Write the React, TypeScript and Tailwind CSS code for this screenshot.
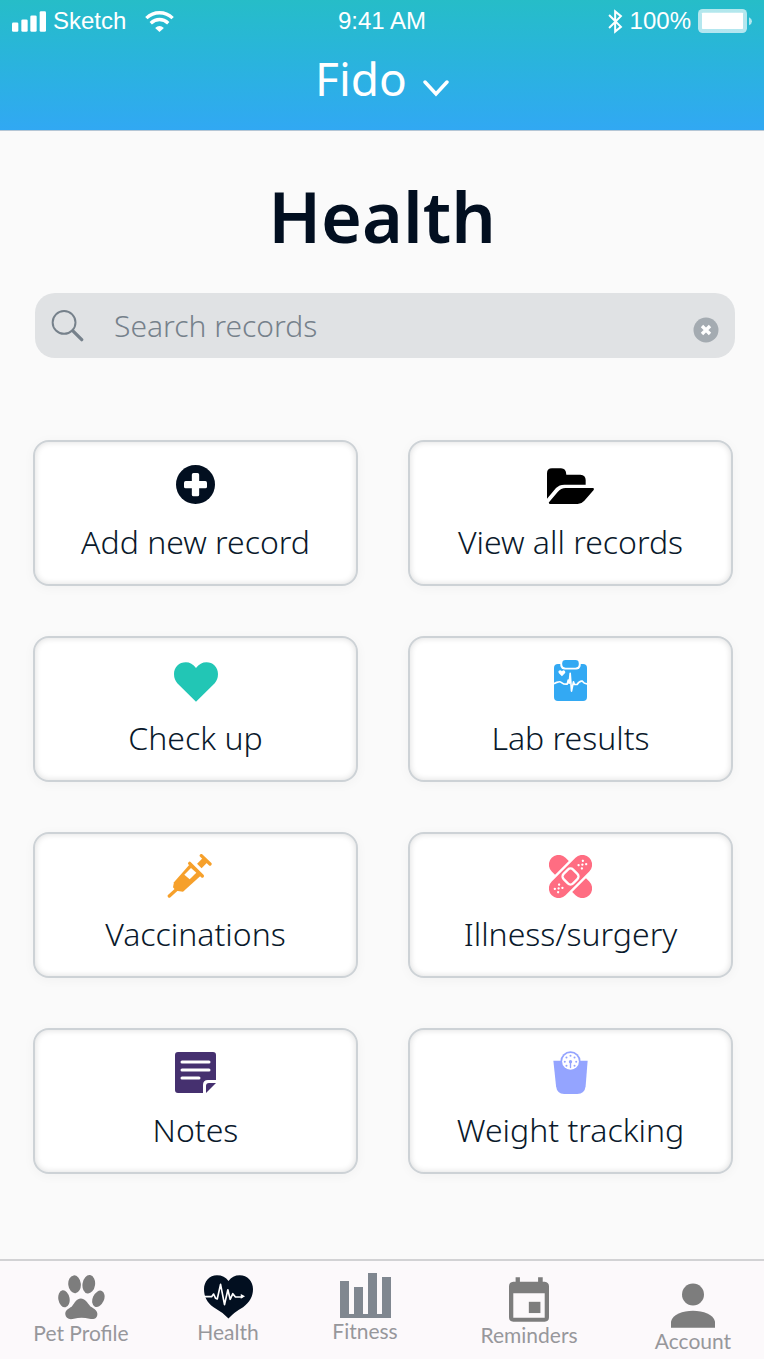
import React, { type ReactNode } from "react";

function SignalIcon() {
  return (
    <svg viewBox="0 0 102 62" className="h-[21px] w-[34px]" fill="currentColor" aria-hidden="true">
      <rect x="0" y="34" width="19" height="28" rx="4" />
      <rect x="28" y="25" width="19" height="37" rx="4" />
      <rect x="55" y="13" width="19" height="49" rx="4" />
      <rect x="83" y="0" width="19" height="62" rx="4" />
    </svg>
  );
}

function WifiIcon() {
  return (
    <svg viewBox="0 0 86 62" className="h-[21px] w-[29px]" fill="none" stroke="currentColor" strokeWidth="10" aria-hidden="true">
      <path d="M4 21Q21 5 43 5T82 21" />
      <path d="M17 36Q29 25 43 25T69 36" />
      <path d="M43 62L30 50Q43 39 56 50Z" fill="currentColor" stroke="none" />
    </svg>
  );
}

function BluetoothIcon() {
  return (
    <svg viewBox="0 0 44 74" className="h-[25px] w-[15px]" fill="none" stroke="currentColor" strokeWidth="6" aria-hidden="true">
      <path d="M3 18L38 53L21 67V7L38 21L3 56" />
    </svg>
  );
}

function BatteryIcon() {
  return (
    <svg viewBox="0 0 162 72" className="h-6 w-[54px]" fill="currentColor" aria-hidden="true">
      <rect x="0" y="0" width="147" height="72" rx="14" opacity="0.65" />
      <rect x="12" y="11" width="123" height="49" rx="2" />
      <path d="M153 25Q162 29 162 37T153 49Z" opacity="0.65" />
    </svg>
  );
}

function PlusIcon() {
  return (
    <svg viewBox="0 0 117 117" className="h-[39px] w-[39px]" aria-hidden="true">
      <circle cx="58.5" cy="58.5" r="58.5" fill="#020f20" />
      <rect x="24" y="48" width="69" height="22" rx="5" fill="#fff" />
      <rect x="47.5" y="24" width="22" height="70" rx="5" fill="#fff" />
    </svg>
  );
}

function FolderIcon() {
  return (
    <svg viewBox="0 0 141 108" className="mt-1 h-9 w-[47px]" fill="#000" aria-hidden="true">
      <path d="M0 92V16Q0 1 15 1H42Q57 1 58 20H100Q116 21 116 36V50H52Q37 50 27 60Z" />
      <path d="M6 103L32 72Q42 60 56 60H138Q142 61 140 66L112 98Q103 108 92 108H10Q4 107 6 103Z" />
    </svg>
  );
}

function HeartIcon() {
  return (
    <svg viewBox="0 0 134 121" className="mt-1 h-10 w-11" fill="#22c6b5" aria-hidden="true">
      <path d="M67 121L10 64Q0 52 0 36C0 14 16 0 36 0Q54 0 67 18Q80 0 99 0C118 0 134 14 134 36Q134 52 124 64Z" />
    </svg>
  );
}

function ClipboardIcon() {
  return (
    <svg viewBox="0 0 100 124" className="h-[41px] w-[33px]" aria-hidden="true">
      <rect x="0" y="12" width="100" height="112" rx="12" fill="#33a9f3" />
      <rect x="19" y="-5" width="62" height="34" rx="14" fill="#fff" />
      <rect x="25" y="0" width="50" height="23" rx="10" fill="#33a9f3" />
      <path d="M24 49L15 40Q12 36 14 33Q19 28 24 34Q29 28 33 33Q36 37 33 40Z" fill="#fff" />
      <path
        d="M0 62Q7 58 11 57Q17 54 24 59Q30 64 40 63L43 51L46 60L49 30L53 84L59 56L62 64H70Q78 52 86 54Q91 62 100 62"
        fill="none"
        stroke="#fff"
        strokeWidth="5"
        strokeLinejoin="round"
        transform="translate(0 10)"
      />
    </svg>
  );
}

function SyringeIcon() {
  return (
    <svg viewBox="51 42 171 132" className="h-11 w-[57px]" aria-hidden="true">
      <g stroke="#f6a02b" strokeLinecap="round">
        <path d="M58 168L82 146" strokeWidth="10" />
        <path d="M119 70L157 108" strokeWidth="10" />
        <path d="M154 47L180 72" strokeWidth="10" />
        <path d="M148 78L165 61" strokeWidth="19" strokeLinecap="butt" />
      </g>
      <path d="M118 74L152 107L99 155L78 152L69 142L72 127Z" fill="#f6a02b" />
      <path d="M103 104L123 84L139 98L119 118Z" fill="#fff" />
    </svg>
  );
}

const bandageDots = [
  [66, 98],
  [66, 112],
  [75, 105],
  [84, 98],
  [84, 112],
  [166, 98],
  [166, 112],
  [175, 105],
  [184, 98],
  [184, 112],
];

function BandageIcon() {
  return (
    <svg viewBox="61 41 128 128" className="h-[43px] w-[43px]" aria-hidden="true">
      <rect x="46" y="76" width="158" height="58" rx="29" fill="#ff6d82" transform="rotate(45 125 105)" />
      <g transform="rotate(-45 125 105)">
        <rect x="40" y="69" width="170" height="72" rx="35" fill="#fff" />
        <rect x="46" y="76" width="158" height="58" rx="29" fill="#ff6d82" />
        <rect x="105" y="85" width="40" height="40" rx="11" fill="none" stroke="#fff" strokeWidth="7" />
        <g fill="#fff">
          {bandageDots.map(([x, y]) => (
            <circle key={`${x}-${y}`} cx={x} cy={y} r="3.4" />
          ))}
        </g>
      </g>
    </svg>
  );
}

function NotesIcon() {
  return (
    <svg viewBox="0 0 41 41" className="h-[41px] w-[41px]" aria-hidden="true">
      <path d="M3 0H38Q41 0 41 3V28H33Q28 28 28 33V41H3Q0 41 0 38V3Q0 0 3 0Z" fill="#45306f" />
      <path d="M31 41V34Q31 31 34 31H41Z" fill="#45306f" />
      <path d="M7 10H34M7 18H34M7 26H24" stroke="#fff" strokeWidth="3" strokeLinecap="round" />
    </svg>
  );
}

function ScaleIcon() {
  return (
    <svg viewBox="72 42 104 128" className="h-[43px] w-[35px]" aria-hidden="true">
      <path d="M73 71H175L169 147Q166 170 144 170H105Q84 170 81 147Z" fill="#94a4ff" />
      <circle cx="124" cy="73" r="30" fill="#94a4ff" />
      <circle cx="124" cy="73" r="25" fill="#fff" />
      <g fill="#94a4ff">
        <circle cx="124" cy="56" r="3" />
        <circle cx="112" cy="61" r="3" />
        <circle cx="136" cy="61" r="3" />
        <circle cx="107" cy="74" r="3" />
        <circle cx="141" cy="74" r="3" />
        <circle cx="112" cy="86" r="3" />
        <circle cx="136" cy="86" r="3" />
        <circle cx="124" cy="74" r="5" />
        <rect x="122" y="72" width="4" height="21" rx="2" />
      </g>
    </svg>
  );
}

function PawIcon() {
  return (
    <svg viewBox="177 74 142 136" className="h-[45px] w-[47px]" fill="#7d7d7d" aria-hidden="true">
      <ellipse cx="227" cy="102" rx="19" ry="27" transform="rotate(-6 227 102)" />
      <ellipse cx="270" cy="102" rx="19" ry="28" transform="rotate(8 270 102)" />
      <ellipse cx="195" cy="146" rx="17" ry="26" transform="rotate(-10 195 146)" />
      <ellipse cx="299" cy="146" rx="17" ry="26" transform="rotate(24 299 146)" />
      <path d="M246 145C258 145 266 158 275 169C287 176 297 182 296 193C295 207 284 209 272 206Q248 200 225 206C211 210 200 205 199 193C198 181 208 176 219 169C227 158 234 145 246 145Z" />
    </svg>
  );
}

function HeartPulseIcon() {
  return (
    <svg viewBox="611 80 148 132" className="h-11 w-[49px]" aria-hidden="true">
      <path d="M685 211Q667 192 640 177C620 163 611 145 611 122C611 98 628 80 650 80Q673 80 685 98Q697 80 719 80C742 80 759 98 759 122C759 145 749 162 729 177Q702 192 685 211Z" fill="#020f20" />
      <path d="M611 145H634L640 137L646 150L651 152L661 108L673 169L683 124L690 153L698 136L706 146H727" fill="none" stroke="#fff" strokeWidth="5" strokeLinejoin="round" />
      <path d="M722 137L735 144L722 151Z" fill="#fff" />
    </svg>
  );
}

function BarsIcon() {
  return (
    <svg viewBox="0 0 51 45" className="h-[45px] w-[51px]" fill="#808790" aria-hidden="true">
      <rect x="0" y="8" width="9" height="37" />
      <rect x="14" y="14" width="9" height="28" />
      <rect x="28" y="0" width="9" height="42" />
      <rect x="42" y="4" width="9" height="41" />
      <rect x="0" y="41" width="51" height="4" />
    </svg>
  );
}

function CalendarIcon() {
  return (
    <svg viewBox="384 82 121 134" className="h-[45px] w-10" fill="#7d7d7d" aria-hidden="true">
      <path
        fillRule="evenodd"
        d="M404 82H417V95H472V82H486V95H492Q505 97 505 109V203Q505 216 492 216H397Q384 216 384 203V109Q384 96 397 95H404ZM397 130V204H492V130Z"
      />
      <rect x="444" y="156" width="35" height="34" />
    </svg>
  );
}

function PersonIcon() {
  return (
    <svg viewBox="873 101 132 134" className="h-[45px] w-11" fill="#7d7d7d" aria-hidden="true">
      <circle cx="939" cy="135" r="33" />
      <path d="M873 235V216C878 195 908 184 939 184S1000 195 1005 216V235Z" />
    </svg>
  );
}

type CardItem = { label: string; icon: ReactNode };

const cards: CardItem[] = [
  { label: "Add new record", icon: <PlusIcon /> },
  { label: "View all records", icon: <FolderIcon /> },
  { label: "Check up", icon: <HeartIcon /> },
  { label: "Lab results", icon: <ClipboardIcon /> },
  { label: "Vaccinations", icon: <SyringeIcon /> },
  { label: "Illness/surgery", icon: <BandageIcon /> },
  { label: "Notes", icon: <NotesIcon /> },
  { label: "Weight tracking", icon: <ScaleIcon /> },
];

type Tab = { label: string; icon: ReactNode; pad: string };

const tabs: Tab[] = [
  { label: "Pet Profile", icon: <PawIcon />, pad: "pt-3.5" },
  { label: "Health", icon: <HeartPulseIcon />, pad: "pt-3.5" },
  { label: "Fitness", icon: <BarsIcon />, pad: "pt-3" },
  { label: "Reminders", icon: <CalendarIcon />, pad: "pt-4" },
  { label: "Account", icon: <PersonIcon />, pad: "pt-[22px]" },
];

function Card({ label, icon }: CardItem) {
  return (
    <button
      type="button"
      className="flex h-[146px] flex-col items-center rounded-2xl border-2 border-[#cdd2d6] bg-white pt-5 text-[#0a192b] shadow-[0_2px_12px_rgba(0,0,0,0.04),inset_0_0_6px_rgba(0,0,0,0.14)]"
    >
      <span className="flex h-11 items-center justify-center">{icon}</span>
      <span className="mt-4 text-[32px] leading-10 font-light whitespace-nowrap">{label}</span>
    </button>
  );
}

export default function App() {
  return (
    <div className="flex min-h-screen flex-col bg-[#fafafa] font-['Noto_Sans','Open_Sans',sans-serif]">
      <header className="h-[131px] border-b border-[#b5c6d5] bg-linear-to-b from-[#26bdc8] to-[#31a8f3] text-white">
        <div className="grid h-[42px] grid-cols-[1fr_auto_1fr] items-center px-3 font-['Liberation_Sans',sans-serif] text-[24px] leading-[42px]">
          <div className="flex items-center gap-[7px]">
            <SignalIcon />
            <span>Sketch</span>
            <span className="ml-3">
              <WifiIcon />
            </span>
          </div>
          <time>9:41 AM</time>
          <div className="flex items-center justify-end gap-[7px]">
            <BluetoothIcon />
            <span>100%</span>
            <BatteryIcon />
          </div>
        </div>
        <button type="button" className="mx-auto flex h-[72px] items-center gap-4 text-[46px] leading-[72px]">
          <span>Fido</span>
          <svg viewBox="0 0 26 17" className="mt-5 h-[17px] w-[26px]" fill="none" stroke="currentColor" strokeWidth="3.5" strokeLinecap="round" aria-hidden="true">
            <path d="M2 2L13 14L24 2" />
          </svg>
        </button>
      </header>

      <main className="flex-1 pb-[84px]">
        <h1 className="pt-10 text-center text-[70px] leading-[90px] font-semibold text-[#020f20]">Health</h1>

        <form role="search" className="mt-8 mr-[29px] ml-[35px] flex h-[65px] items-center rounded-[20px] bg-[#e0e2e4] px-4">
          <svg viewBox="-1 -1 101 98" className="h-8 w-[33px] shrink-0" fill="none" stroke="#76818b" strokeLinecap="round" aria-hidden="true">
            <circle cx="39" cy="37" r="35" strokeWidth="6" />
            <path d="M66 63L93 90" strokeWidth="10" />
          </svg>
          <input
            type="text"
            aria-label="Search records"
            placeholder="Search records"
            className="ml-[30px] min-w-0 flex-1 bg-transparent text-[30px] leading-10 font-light text-[#76818b] outline-none placeholder:text-[#76818b]"
          />
          <button type="button" aria-label="Clear search" className="mt-2">
            <svg viewBox="0 0 26 26" className="h-[26px] w-[26px]" aria-hidden="true">
              <circle cx="13" cy="13" r="12.5" fill="#a4abb1" />
              <path d="M9 9L17 17M17 9L9 17" stroke="#fff" strokeWidth="3.4" />
            </svg>
          </button>
        </form>

        <div className="mt-[82px] mr-[31px] ml-[33px] grid grid-cols-2 gap-[50px]">
          {cards.map((card) => (
            <Card key={card.label} {...card} />
          ))}
        </div>
      </main>

      <nav className="grid h-[100px] grid-cols-[162fr_132fr_142fr_186fr_142fr] border-t-2 border-[#d2d2d4] bg-[#fcf9fb] font-['Lato',sans-serif]">
        {tabs.map((tab) => (
          <a key={tab.label} href="#" className={`flex flex-col items-center ${tab.pad}`}>
            {tab.icon}
            <span className="text-[21px] leading-[26px] text-[#97979b]">{tab.label}</span>
          </a>
        ))}
      </nav>
    </div>
  );
}
